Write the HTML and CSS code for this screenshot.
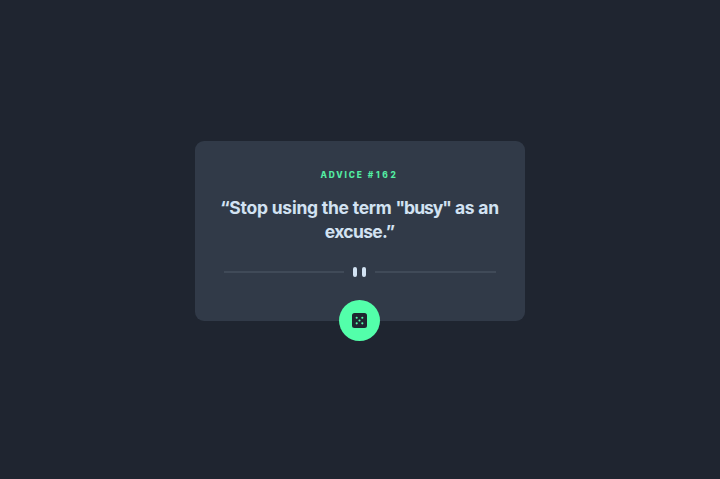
FILE: index.html
```html
<!DOCTYPE html>
<html lang="en">
<head>
<meta charset="utf-8">
<title>Advice generator</title>
<link rel="stylesheet" href="styles.css">
</head>
<body>
<main class="card">
<h1 class="label">ADVICE <span class="number">#162</span></h1>
<p class="quote"><span class="line first">“Stop using the term <span class="term">"busy"</span> as an</span> <span class="line second">excuse.”</span></p>
<div class="divider"><span class="rule"></span><span class="bar"></span><span class="bar"></span><span class="rule"></span></div>
<button class="dice" aria-label="New advice">
<svg width="15" height="15" viewBox="0 0 24 24"><path fill="#1f2630" fill-rule="evenodd" d="M20 0H4a4 4 0 0 0-4 4v16a4 4 0 0 0 4 4h16a4 4 0 0 0 4-4V4a4 4 0 0 0-4-4ZM7.500 18.200a1.700 1.700 0 1 1 0-3.400 1.700 1.700 0 0 1 0 3.400Zm0-9a1.700 1.700 0 1 1 0-3.400 1.700 1.700 0 0 1 0 3.400Zm4.500 4.500a1.700 1.700 0 1 1 0-3.400 1.700 1.700 0 0 1 0 3.400Zm4.500 4.500a1.700 1.700 0 1 1 0-3.400 1.700 1.700 0 0 1 0 3.400Zm0-9a1.700 1.700 0 1 1 0-3.400 1.700 1.700 0 0 1 0 3.400Z"/></svg>
</button>
</main>
</body>
</html>
```
FILE: styles.css
```css
* { box-sizing: border-box; }
body {
  margin: 0;
  height: 479px;
  padding: 140.6px 0 0 194.5px;
  background: #1f2530;
  font-family: Inter, "Liberation Sans", sans-serif;
}
.card {
  position: relative;
  width: 330px;
  height: 180px;
  padding-top: 29.4px;
  border-radius: 9px;
  background: #313a48;
  text-align: center;
}
.label {
  margin: 0;
  font-size: 8.3px;
  font-weight: 800;
  line-height: 11px;
  letter-spacing: 1.85px;
  word-spacing: 0.6px;
  color: #53eda3;
}
.number { letter-spacing: 2.7px; }
.quote {
  margin: 15px 0 0;
  font-size: 17.5px;
  font-weight: 700;
  line-height: 23px;
  color: #d2e2f2;
}
.line {
  display: block;
  white-space: nowrap;
}
.first { letter-spacing: -0.25px; }
.term { letter-spacing: -1px; }
.second {
  padding-top: 1px;
  letter-spacing: -0.65px;
}
.divider {
  display: flex;
  align-items: center;
  height: 10px;
  margin: 24px 29px 0;
}
.rule {
  flex: 1;
  height: 2px;
  background: #404a58;
}
.bar {
  width: 4px;
  height: 10px;
  border-radius: 2px;
  background: #d2e2f2;
}
.bar:nth-child(2) { margin: 0 5px 0 9px; }
.bar:nth-child(3) { margin-right: 9px; }
.dice {
  position: absolute;
  left: 144.5px;
  bottom: -20.4px;
  display: grid;
  place-items: center;
  width: 41px;
  height: 41px;
  padding: 0;
  border: 0;
  border-radius: 50%;
  background: #53ffaa;
}
```
